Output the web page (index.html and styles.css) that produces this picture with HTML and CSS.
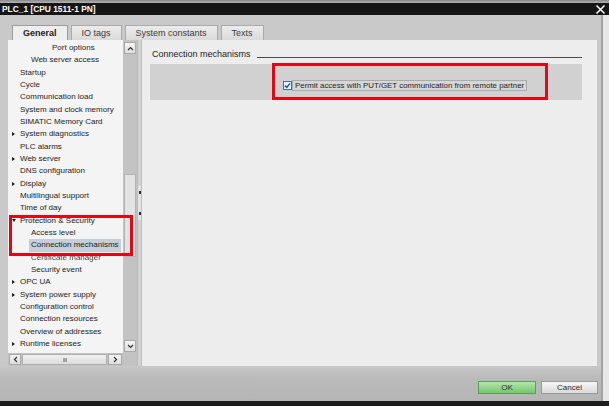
FILE: index.html
```html
<!DOCTYPE html>
<html lang="en">
<head>
<meta charset="utf-8">
<title>PLC_1 [CPU 1511-1 PN]</title>
<link rel="stylesheet" href="styles.css">
</head>
<body>
<div class="top-edge"></div>
<div class="titlebar">
  <span class="title">PLC_1 [CPU 1511-1 PN]</span>
  <svg class="close" viewBox="0 0 11 11" aria-label="Close">
    <path d="M1.5 1.5 L9.5 9.5 M9.5 1.5 L1.5 9.5" stroke="#fff" stroke-width="1.6" fill="none"/>
  </svg>
</div>
<div class="frame">
  <div class="window">
    <div class="tabs">
      <div class="tab active">General</div>
      <div class="tab">IO tags</div>
      <div class="tab">System constants</div>
      <div class="tab">Texts</div>
    </div>

    <div class="panel">
      <div class="nav">
        <div class="nav-main">
          <div class="tree">
            <div class="row lv3"><span class="tw"></span><span class="lbl">Port options</span></div>
            <div class="row lv2"><span class="tw"></span><span class="lbl">Web server access</span></div>
            <div class="row"><span class="tw"></span><span class="lbl">Startup</span></div>
            <div class="row"><span class="tw"></span><span class="lbl">Cycle</span></div>
            <div class="row"><span class="tw"></span><span class="lbl">Communication load</span></div>
            <div class="row"><span class="tw"></span><span class="lbl">System and clock memory</span></div>
            <div class="row"><span class="tw"></span><span class="lbl">SIMATIC Memory Card</span></div>
            <div class="row"><span class="tw"><i class="arr-r"></i></span><span class="lbl">System diagnostics</span></div>
            <div class="row"><span class="tw"></span><span class="lbl">PLC alarms</span></div>
            <div class="row"><span class="tw"><i class="arr-r"></i></span><span class="lbl">Web server</span></div>
            <div class="row"><span class="tw"></span><span class="lbl">DNS configuration</span></div>
            <div class="row"><span class="tw"><i class="arr-r"></i></span><span class="lbl">Display</span></div>
            <div class="row"><span class="tw"></span><span class="lbl">Multilingual support</span></div>
            <div class="row"><span class="tw"></span><span class="lbl">Time of day</span></div>
            <div class="row"><span class="tw"><i class="arr-d"></i></span><span class="lbl">Protection &amp; Security</span></div>
            <div class="row lv2"><span class="tw"></span><span class="lbl">Access level</span></div>
            <div class="row lv2 selected"><span class="tw"></span><span class="lbl">Connection mechanisms</span></div>
            <div class="row lv2 hazy"><span class="tw"></span><span class="lbl">Certificate manager</span></div>
            <div class="row lv2"><span class="tw"></span><span class="lbl">Security event</span></div>
            <div class="row"><span class="tw"><i class="arr-r"></i></span><span class="lbl">OPC UA</span></div>
            <div class="row"><span class="tw"><i class="arr-r"></i></span><span class="lbl">System power supply</span></div>
            <div class="row"><span class="tw"></span><span class="lbl">Configuration control</span></div>
            <div class="row"><span class="tw"></span><span class="lbl">Connection resources</span></div>
            <div class="row"><span class="tw"></span><span class="lbl">Overview of addresses</span></div>
            <div class="row"><span class="tw"><i class="arr-r"></i></span><span class="lbl">Runtime licenses</span></div>
          </div>
          <div class="vscroll">
            <div class="sb-btn">
              <svg viewBox="0 0 7 5" class="chev"><path d="M1 4 L3.5 1.5 L6 4" stroke="#333" stroke-width="1.2" fill="none"/></svg>
            </div>
            <div class="thumb-v"></div>
            <div class="sb-btn down">
              <svg viewBox="0 0 7 5" class="chev"><path d="M1 1 L3.5 3.5 L6 1" stroke="#333" stroke-width="1.2" fill="none"/></svg>
            </div>
          </div>
        </div>
        <div class="hrow">
          <div class="hscroll">
            <div class="sb-btn h left">
              <svg viewBox="0 0 5 7" class="chev-h"><path d="M4 1 L1.5 3.5 L4 6" stroke="#333" stroke-width="1.2" fill="none"/></svg>
            </div>
            <div class="thumb-h"><span class="grip"></span></div>
            <div class="sb-btn h right">
              <svg viewBox="0 0 5 7" class="chev-h"><path d="M1 1 L3.5 3.5 L1 6" stroke="#333" stroke-width="1.2" fill="none"/></svg>
            </div>
          </div>
          <div class="corner"></div>
        </div>
      </div>

      <div class="splitter">
        <div class="handle"><i class="mark"></i><i class="mark"></i></div>
      </div>

      <div class="content">
        <div class="heading">
          <span>Connection mechanisms</span>
          <span class="rule"></span>
        </div>
        <div class="group">
          <svg class="check" viewBox="0 0 9 9">
            <rect x="0.5" y="0.5" width="8" height="8" fill="#eaf2fb" stroke="#3f6fa3"/>
            <path d="M2 4.6 L3.8 6.4 L7 2.4" stroke="#1d5aa8" stroke-width="1.5" fill="none"/>
          </svg>
          <span class="check-label">Permit access with PUT/GET communication from remote partner</span>
        </div>
        <div class="mark-box content-mark"></div>
      </div>

      <div class="mark-box tree-mark"></div>
    </div>

    <div class="footer">
      <div class="btn ok">OK</div>
      <div class="btn">Cancel</div>
    </div>
  </div>
  <div class="outside"></div>
</div>
<div class="taskbar"></div>
</body>
</html>
```

FILE: styles.css
```css
* { box-sizing: border-box; }

html, body { margin: 0; padding: 0; }

body {
  width: 609px;
  height: 406px;
  overflow: hidden;
  background: #e6e6e6;
  font-family: "Liberation Sans", Arial, sans-serif;
  display: flex;
  flex-direction: column;
}

/* window chrome */
.top-edge {
  height: 3px;
  background: linear-gradient(#8a8a8a, #b6b6b6);
}

.titlebar {
  height: 12px;
  background: #161616;
  display: flex;
  align-items: center;
  justify-content: space-between;
  padding: 0 3px 0 2px;
}

.title {
  color: #fff;
  font-weight: bold;
  font-size: 8.4px;
  line-height: 12px;
}

.close { width: 11px; height: 11px; display: block; }

.frame {
  flex: 1;
  display: flex;
  min-height: 0;
}

.window {
  width: 603px;
  background: #c9c9c9;
  border-right: 2px solid #a2a2a2;
  display: flex;
  flex-direction: column;
  padding: 10px 4px 0 8px;
}

.outside { flex: 1; background: #e7e7e7; }

.taskbar { height: 5px; background: #1c1c1c; }

/* tabs */
.tabs {
  height: 15px;
  display: flex;
  gap: 3px;
  padding-left: 4px;
}

.tab {
  height: 15px;
  padding: 0 10px;
  font-size: 9px;
  line-height: 14px;
  color: #3a3a3a;
  background: linear-gradient(#ececec, #dadada);
  border: 1px solid #aaaaaa;
  border-bottom: none;
}

.tab.active {
  background: #eeeeee;
  font-weight: bold;
  color: #222;
  border-color: #9c9c9c;
}

/* main panel */
.panel {
  height: 326px;
  display: flex;
  position: relative;
  background: #ececec;
}

.nav {
  width: 129px;
  display: flex;
  flex-direction: column;
}

.nav-main {
  flex: 1;
  display: flex;
  min-height: 0;
}

.tree {
  width: 115px;
  background: #f4f4f4;
  padding-top: 2px;
  overflow: hidden;
}

.row {
  height: 12.33px;
  line-height: 12.33px;
  display: flex;
  align-items: center;
  padding-left: 4px;
  font-size: 8px;
  color: #1c1c1c;
  white-space: nowrap;
}

.row.lv2 { padding-left: 15px; }
.row.lv3 { padding-left: 36px; }

.tw {
  width: 8px;
  flex: none;
  display: flex;
  align-items: center;
}

.lbl { padding: 0 2px; margin-left: -2px; }

.row.selected .lbl { background: #c7ced8; }

.row.hazy { filter: blur(0.6px); color: #444; }

.arr-r {
  display: block;
  width: 0;
  height: 0;
  border-top: 2.5px solid transparent;
  border-bottom: 2.5px solid transparent;
  border-left: 3.5px solid #1a1a1a;
}

.arr-d {
  display: block;
  width: 0;
  height: 0;
  border-left: 2.5px solid transparent;
  border-right: 2.5px solid transparent;
  border-top: 3.5px solid #1a1a1a;
}

/* scrollbars */
.vscroll {
  width: 14px;
  background: #c3c3c3;
  display: flex;
  flex-direction: column;
  padding: 2px 1px 1px 1px;
}

.sb-btn {
  height: 12px;
  flex: none;
  background: linear-gradient(#f4f4f4, #dedede);
  border: 1px solid #a8a8a8;
  display: flex;
  align-items: center;
  justify-content: center;
}

.sb-btn.down { margin-top: auto; }

.chev { width: 7px; height: 5px; display: block; }
.chev-h { width: 5px; height: 7px; display: block; }

.thumb-v {
  margin-top: 120px;
  height: 83px;
  background: #e3e3e3;
  border: 1px solid #b4b4b4;
}

.hrow {
  height: 13px;
  display: flex;
}

.hscroll {
  width: 115px;
  background: #c3c3c3;
  display: flex;
  gap: 1px;
  padding: 1px 1px 1px 1px;
}

.sb-btn.h { height: 11px; }
.sb-btn.left { width: 12px; }
.sb-btn.right { width: 14px; }

.thumb-h {
  flex: 1;
  background: linear-gradient(#f0f0f0, #dcdcdc);
  border: 1px solid #b0b0b0;
  display: flex;
  align-items: center;
  justify-content: center;
}

.grip { width: 4px; height: 4px; background: #a4a4a4; }

.corner { width: 14px; background: #c3c3c3; }

/* splitter between tree and editor */
.splitter {
  width: 4px;
  background: #d2d2d2;
  border-left: 1px solid #b9b9b9;
  display: flex;
  flex-direction: column;
  justify-content: center;
}

.handle {
  height: 34px;
  background: #e4e4e4;
  display: flex;
  flex-direction: column;
  justify-content: space-between;
  align-items: center;
  padding: 5px 0;
}

.mark { display: block; width: 2px; height: 3px; background: #2a2a2a; }

/* editor area */
.content {
  flex: 1;
  position: relative;
  background: #ededed;
  border-left: 1px solid #bdbdbd;
  padding: 7px 15px 0 8px;
}

.heading {
  height: 13px;
  display: flex;
  align-items: center;
  padding-left: 2px;
  font-size: 9px;
  color: #222;
}

.rule {
  flex: 1;
  height: 1px;
  background: #4b4b4b;
  margin-left: 6px;
  margin-top: 7px;
}

.group {
  margin-top: 4px;
  height: 36px;
  background: #d1d1d1;
  display: flex;
  align-items: flex-start;
  padding: 16px 0 0 133px;
}

.check { width: 9px; height: 9px; display: block; margin-top: 1px; flex: none; }

.check-label {
  height: 11px;
  line-height: 10px;
  font-size: 7.9px;
  color: #1e1e1e;
  border: 1px solid #ababab;
  background: #d6d6d6;
  padding: 0 2px 0 2px;
  white-space: nowrap;
}

/* red highlight frames drawn on top */
.mark-box {
  position: absolute;
  border: 3px solid #e30613;
  pointer-events: none;
}

.content-mark { left: 130px; top: 23px; width: 276px; height: 37px; }

.tree-mark { left: 1px; top: 175px; width: 124px; height: 41px; }

/* dialog buttons */
.footer {
  height: 35px;
  margin: 0 -4px 0 -8px;
  padding: 15px 3px 0 0;
  display: flex;
  justify-content: flex-end;
  align-items: flex-start;
  gap: 5px;
  background: linear-gradient(#c8c8c8 0, #bababa 12px, #b5b5b5);
}

.btn {
  width: 57px;
  height: 13px;
  font-size: 8px;
  line-height: 11px;
  text-align: center;
  color: #2b2b2b;
  border: 1px solid #9a9a9a;
  background: linear-gradient(#f6f6f6, #d9d9d9);
}

.btn.ok {
  width: 58px;
  border-color: #5e9e58;
  background: linear-gradient(#b4e6ad, #74c66c);
  color: #1f2f1d;
}
```
